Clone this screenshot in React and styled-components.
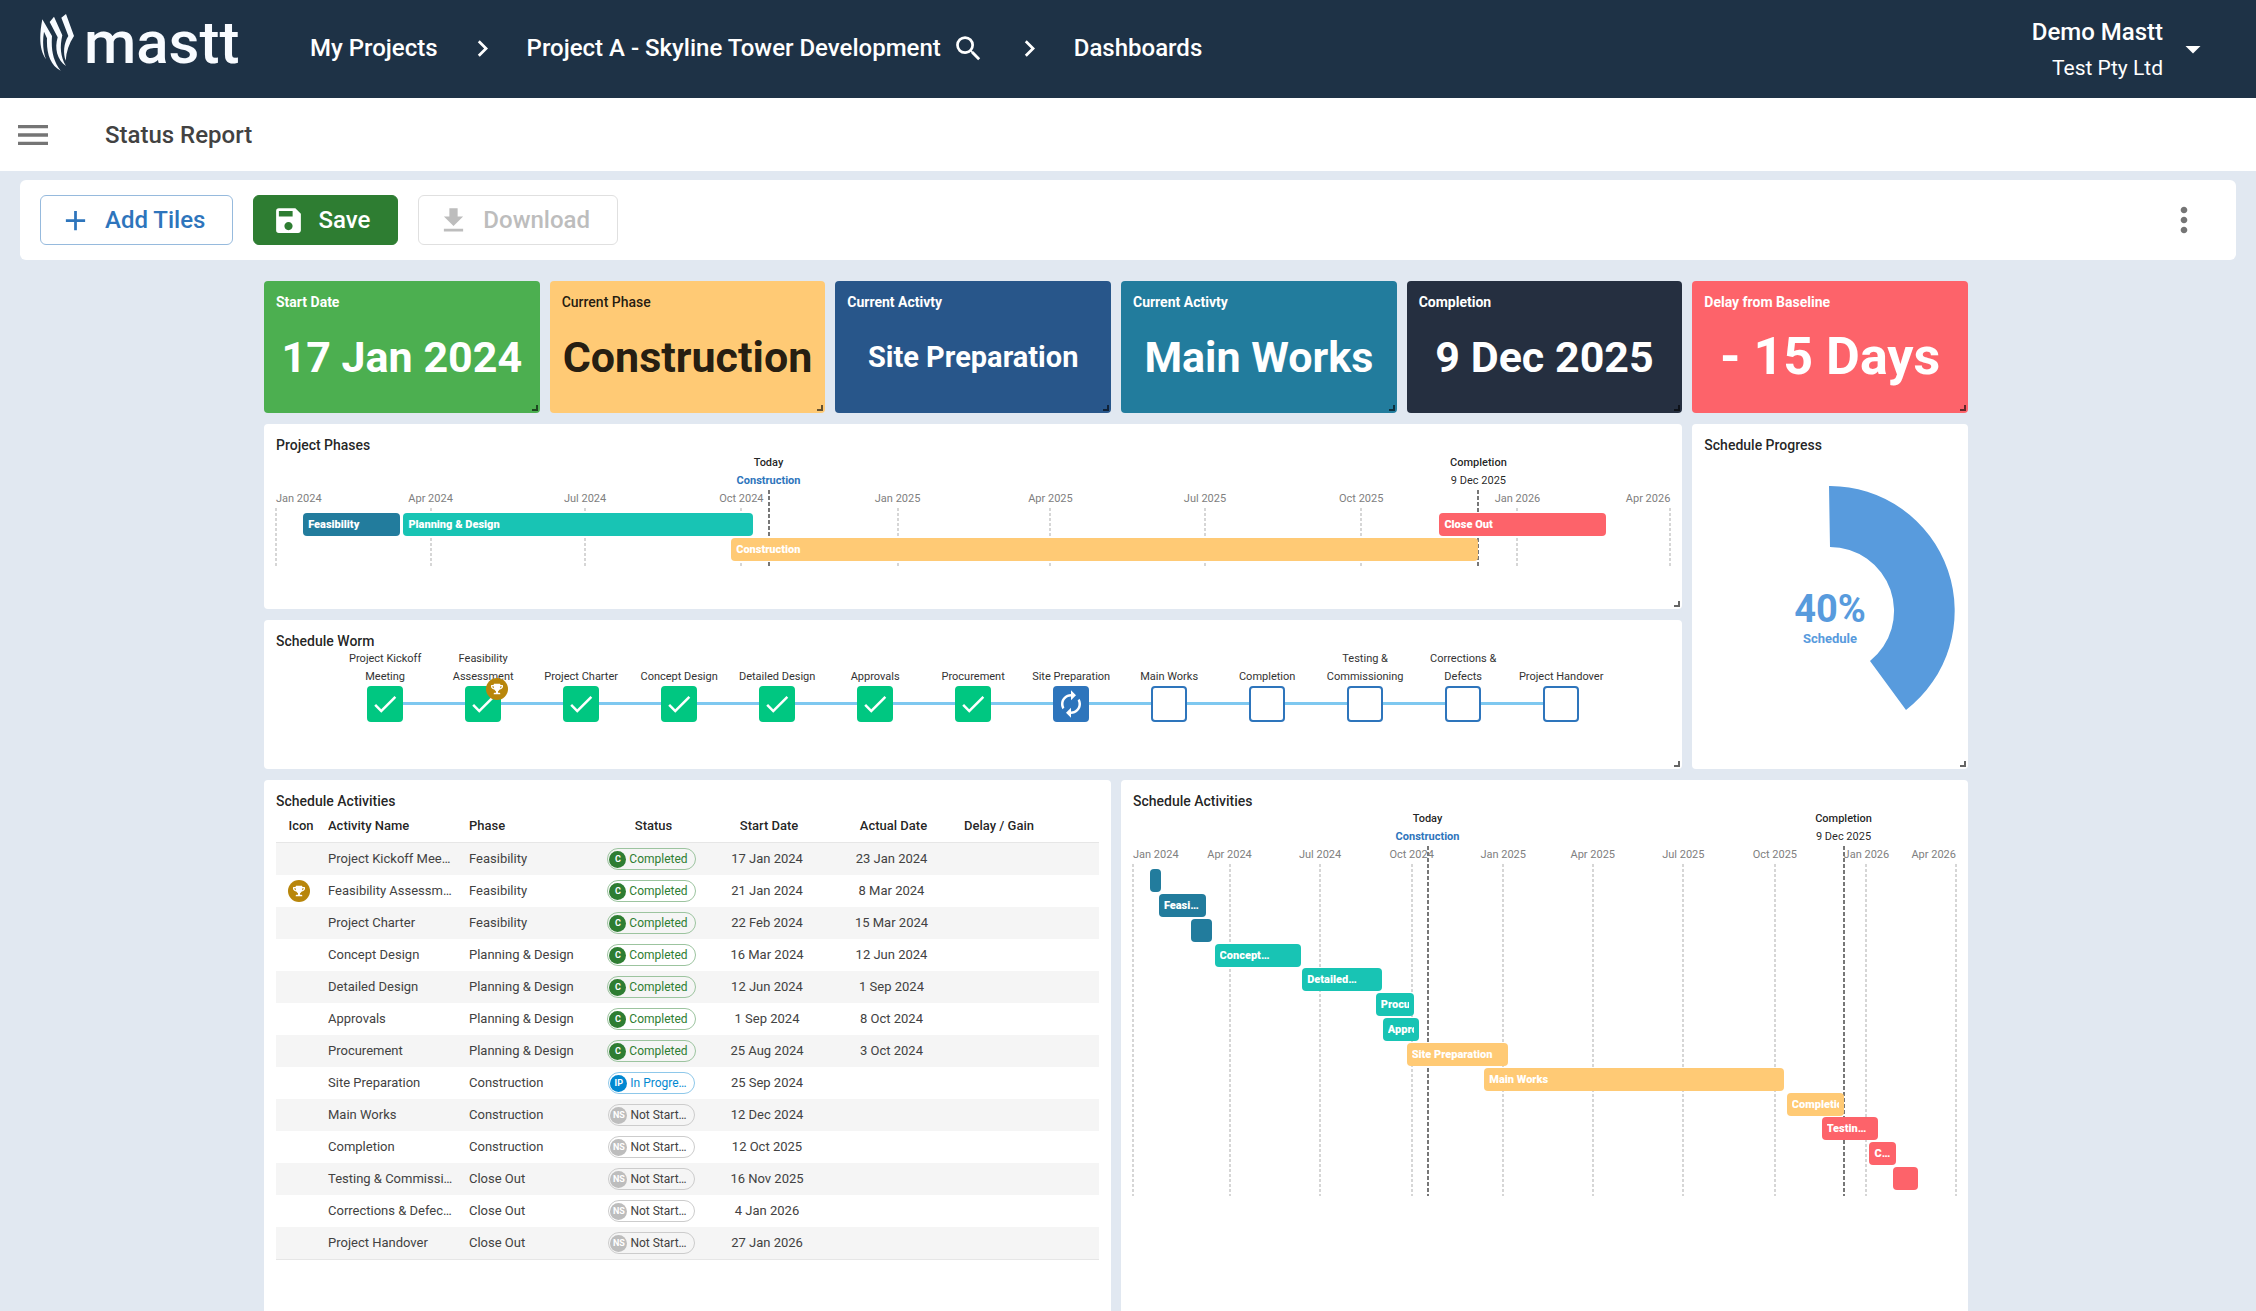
import styled, { createGlobalStyle, css } from "styled-components";
import {
	MdAdd,
	MdArrowDropDown,
	MdAutorenew,
	MdCheck,
	MdChevronRight,
	MdDownload,
	MdMenu,
	MdMoreVert,
	MdSave,
	MdSearch,
} from "react-icons/md";
import { FaTrophy } from "react-icons/fa";

const colors = {
	navy: "#1e3246",
	page: "#e1e8f1",
	blue: "#2e75bc",
	save: "#2e7d32",
	grey: "#757575",
	feasibility: "#227c9d",
	planning: "#18c4b4",
	construction: "#ffca75",
	closeOut: "#fd636a",
	progress: "#589bdd",
	worm: "#7ec8f0",
	done: "#00c781",
	gold: "#b8860b",
};

const kpis = [
	{ title: "Start Date", value: "17 Jan 2024", size: "large", bg: "#4caf50" },
	{ title: "Current Phase", value: "Construction", size: "large", bg: colors.construction, dark: true },
	{ title: "Current Activty", value: "Site Preparation", size: "small", bg: "#28568a" },
	{ title: "Current Activty", value: "Main Works", size: "large", bg: colors.feasibility },
	{ title: "Completion", value: "9 Dec 2025", size: "large", bg: "#252f40" },
	{ title: "Delay from Baseline", value: "- 15 Days", size: "huge", bg: colors.closeOut },
];

const ticks = [
	{ label: "Jan 2024", date: "2024-01-01" },
	{ label: "Apr 2024", date: "2024-04-01" },
	{ label: "Jul 2024", date: "2024-07-01" },
	{ label: "Oct 2024", date: "2024-10-01" },
	{ label: "Jan 2025", date: "2025-01-01" },
	{ label: "Apr 2025", date: "2025-04-01" },
	{ label: "Jul 2025", date: "2025-07-01" },
	{ label: "Oct 2025", date: "2025-10-01" },
	{ label: "Jan 2026", date: "2026-01-01" },
	{ label: "Apr 2026", date: "2026-04-01" },
];

const markers = [
	{ title: "Today", note: "Construction", date: "2024-10-17", active: true },
	{ title: "Completion", note: "9 Dec 2025", date: "2025-12-09" },
];

const phaseBars = [
	{ row: 0, label: "Feasibility", from: "2024-01-17", to: "2024-03-14", color: colors.feasibility },
	{ row: 0, label: "Planning & Design", from: "2024-03-16", to: "2024-10-08", color: colors.planning },
	{ row: 0, label: "Close Out", from: "2025-11-16", to: "2026-02-22", color: colors.closeOut },
	{ row: 1, label: "Construction", from: "2024-09-25", to: "2025-12-09", color: colors.construction },
];

const activityBars = [
	{ label: "", from: "2024-01-17", to: "2024-01-23", color: colors.feasibility },
	{ label: "Feasi…", from: "2024-01-21", to: "2024-03-08", color: colors.feasibility },
	{ label: "", from: "2024-02-22", to: "2024-03-14", color: colors.feasibility },
	{ label: "Concept…", from: "2024-03-17", to: "2024-06-12", color: colors.planning },
	{ label: "Detailed…", from: "2024-06-13", to: "2024-09-01", color: colors.planning },
	{ label: "Procurement", from: "2024-08-26", to: "2024-10-03", color: colors.planning },
	{ label: "Approvals", from: "2024-09-02", to: "2024-10-08", color: colors.planning },
	{ label: "Site Preparation", from: "2024-09-26", to: "2025-01-06", color: colors.construction },
	{ label: "Main Works", from: "2024-12-13", to: "2025-10-10", color: colors.construction },
	{ label: "Completion", from: "2025-10-13", to: "2025-12-09", color: colors.construction },
	{ label: "Testin…", from: "2025-11-17", to: "2026-01-13", color: colors.closeOut },
	{ label: "C…", from: "2026-01-04", to: "2026-01-31", color: colors.closeOut },
	{ label: "", from: "2026-01-28", to: "2026-02-22", color: colors.closeOut },
].map((bar, row) => ({ ...bar, row }));

const wormSteps = [
	{ name: "Project Kickoff Meeting", state: "done" },
	{ name: "Feasibility Assessment", state: "done", trophy: true },
	{ name: "Project Charter", state: "done" },
	{ name: "Concept Design", state: "done" },
	{ name: "Detailed Design", state: "done" },
	{ name: "Approvals", state: "done" },
	{ name: "Procurement", state: "done" },
	{ name: "Site Preparation", state: "active" },
	{ name: "Main Works", state: "todo" },
	{ name: "Completion", state: "todo" },
	{ name: "Testing & Commissioning", state: "todo" },
	{ name: "Corrections & Defects", state: "todo" },
	{ name: "Project Handover", state: "todo" },
];

const statuses = {
	C: { label: "Completed", color: "#2e7d32", border: "#9cc49f", text: "#2e7d32" },
	IP: { label: "In Progre…", color: "#0288d1", border: "#8ec8ea", text: "#0288d1" },
	NS: { label: "Not Start…", color: "#bdbdbd", border: "#cccccc", text: "#424242" },
};

const activities = [
	{ name: "Project Kickoff Mee…", phase: "Feasibility", status: "C", start: "17 Jan 2024", actual: "23 Jan 2024" },
	{ name: "Feasibility Assessm…", phase: "Feasibility", status: "C", start: "21 Jan 2024", actual: "8 Mar 2024", trophy: true },
	{ name: "Project Charter", phase: "Feasibility", status: "C", start: "22 Feb 2024", actual: "15 Mar 2024" },
	{ name: "Concept Design", phase: "Planning & Design", status: "C", start: "16 Mar 2024", actual: "12 Jun 2024" },
	{ name: "Detailed Design", phase: "Planning & Design", status: "C", start: "12 Jun 2024", actual: "1 Sep 2024" },
	{ name: "Approvals", phase: "Planning & Design", status: "C", start: "1 Sep 2024", actual: "8 Oct 2024" },
	{ name: "Procurement", phase: "Planning & Design", status: "C", start: "25 Aug 2024", actual: "3 Oct 2024" },
	{ name: "Site Preparation", phase: "Construction", status: "IP", start: "25 Sep 2024" },
	{ name: "Main Works", phase: "Construction", status: "NS", start: "12 Dec 2024" },
	{ name: "Completion", phase: "Construction", status: "NS", start: "12 Oct 2025" },
	{ name: "Testing & Commissi…", phase: "Close Out", status: "NS", start: "16 Nov 2025" },
	{ name: "Corrections & Defec…", phase: "Close Out", status: "NS", start: "4 Jan 2026" },
	{ name: "Project Handover", phase: "Close Out", status: "NS", start: "27 Jan 2026" },
];

function Logo() {
	return (
		<LogoLink href="#home">
			<svg width="34" height="57" viewBox="59 42 102 171" fill="#f8fbff" aria-hidden="true">
				<path d="M66 58 L95 108 C92 150 98 182 121 212 C90 196 78 160 80 115 L71 95 C66 125 68 155 77 178 C57 150 56 110 66 58Z" />
				<path d="M88 66 L101 50 L126 106 C118 140 120 170 137 198 C110 180 102 145 112 112Z" />
				<path d="M123 53 L137 42 L161 108 C146 130 138 155 136 182 C128 160 130 130 144 108Z" />
			</svg>
			<span>mastt</span>
		</LogoLink>
	);
}

function TrophyBadge({ className }) {
	return (
		<Trophy className={className}>
			<FaTrophy size={12} />
		</Trophy>
	);
}

function Tile({ title, area, children }) {
	return (
		<TileStyled $area={area}>
			<TileTitle>{title}</TileTitle>
			{children}
			<ResizeHandle />
		</TileStyled>
	);
}

function Timeline({ start, end, bars, height }) {
	const from = Date.parse(start);
	const total = Date.parse(end) - from;
	const percent = (date) => ((Date.parse(date) - from) / total) * 100;
	const rows = Math.max(...bars.map((bar) => bar.row)) + 1;
	// the first tick always sits on the left edge of the plot
	const tickLeft = (tick, i) => `${i === 0 ? 0 : percent(tick.date)}%`;

	return (
		<TimelineStyled>
			<MarkerLabels>
				{markers.map((marker) => (
					<MarkerLabel key={marker.title} $active={marker.active} style={{ left: `${percent(marker.date)}%` }}>
						<strong>{marker.title}</strong>
						<span>{marker.note}</span>
					</MarkerLabel>
				))}
			</MarkerLabels>
			<Axis>
				{ticks.map((tick, i) => (
					<AxisLabel key={tick.label} style={{ left: tickLeft(tick, i) }}>
						{tick.label}
					</AxisLabel>
				))}
			</Axis>
			<Plot $height={height}>
				{ticks.map((tick, i) => (
					<GridLine key={tick.label} style={{ left: tickLeft(tick, i) }} />
				))}
				{markers.map((marker) => (
					<MarkerLine key={marker.title} style={{ left: `${percent(marker.date)}%` }} />
				))}
				{Array.from({ length: rows }, (_, row) => (
					<BarRow key={row}>
						{bars
							.filter((bar) => bar.row === row)
							.map((bar) => (
								<Bar
									key={bar.from}
									$color={bar.color}
									style={{
										right: `${100 - percent(bar.to)}%`,
										width: `${percent(bar.to) - percent(bar.from)}%`,
									}}
								>
									<span>{bar.label}</span>
								</Bar>
							))}
					</BarRow>
				))}
			</Plot>
		</TimelineStyled>
	);
}

function Worm() {
	return (
		<WormList>
			{wormSteps.map((step) => (
				<WormStep key={step.name}>
					<WormLabel>{step.name}</WormLabel>
					<WormNode $state={step.state}>
						{step.state === "done" && <MdCheck size={30} />}
						{step.state === "active" && <MdAutorenew size={30} />}
						{step.trophy && <WormTrophy />}
					</WormNode>
				</WormStep>
			))}
		</WormList>
	);
}

function StatusChip({ code }) {
	const status = statuses[code];
	return (
		<Chip $status={status}>
			<b>{code}</b>
			{status.label}
		</Chip>
	);
}

function ActivityTable() {
	return (
		<Table>
			<colgroup>
				<Col $width={46} />
				<Col $width={141} />
				<Col $width={140} />
				<Col $width={97} />
				<Col $width={134} />
				<Col $width={115} />
				<Col $width={96} />
				<col />
			</colgroup>
			<thead>
				<tr>
					<HeadCell $center>Icon</HeadCell>
					<HeadCell>Activity Name</HeadCell>
					<HeadCell>Phase</HeadCell>
					<HeadCell $center>Status</HeadCell>
					<HeadCell $center>Start Date</HeadCell>
					<HeadCell $center>Actual Date</HeadCell>
					<HeadCell $center>Delay / Gain</HeadCell>
					<HeadCell />
				</tr>
			</thead>
			<tbody>
				{activities.map((activity) => (
					<BodyRow key={activity.name}>
						<Cell $center>{activity.trophy && <TrophyBadge />}</Cell>
						<Cell>{activity.name}</Cell>
						<Cell>{activity.phase}</Cell>
						<ChipCell>
							<StatusChip code={activity.status} />
						</ChipCell>
						<Cell $center>{activity.start}</Cell>
						<Cell $center>{activity.actual}</Cell>
						<Cell />
						<Cell />
					</BodyRow>
				))}
			</tbody>
		</Table>
	);
}

function ProgressDonut() {
	return (
		<Donut width="250" height="250" viewBox="0 0 250 250" role="img" aria-label="Schedule progress">
			<path
				d="M124 0 A125 125 0 0 1 201 224 L165 175 A64 64 0 0 0 125 61Z"
				fill={colors.progress}
			/>
			<text x="125" y="136" fontSize="38">40%</text>
			<text x="125" y="157" fontSize="13">Schedule</text>
		</Donut>
	);
}

export default function App() {
	return (
		<Page>
			<GlobalStyle />
			<Header>
				<Logo />
				<Breadcrumbs aria-label="Breadcrumb">
					<a href="#projects">My Projects</a>
					<MdChevronRight size={33} />
					<ProjectCrumb>
						<a href="#project">Project A - Skyline Tower Development</a>
						<IconButton aria-label="Search projects">
							<MdSearch size={33} />
						</IconButton>
					</ProjectCrumb>
					<MdChevronRight size={33} />
					<a href="#dashboards">Dashboards</a>
				</Breadcrumbs>
				<User>
					<UserText>
						<strong>Demo Mastt</strong>
						<span>Test Pty Ltd</span>
					</UserText>
					<IconButton aria-label="Account menu">
						<MdArrowDropDown size={36} />
					</IconButton>
				</User>
			</Header>
			<SubHeader>
				<IconButton aria-label="Open menu">
					<MdMenu size={40} color={colors.grey} />
				</IconButton>
				<h1>Status Report</h1>
			</SubHeader>
			<Toolbar>
				<ToolButton $variant="outlined">
					<MdAdd size={33} />
					Add Tiles
				</ToolButton>
				<ToolButton $variant="filled">
					<MdSave size={33} />
					Save
				</ToolButton>
				<ToolButton disabled>
					<MdDownload size={33} />
					Download
				</ToolButton>
				<MoreButton aria-label="More options">
					<MdMoreVert size={40} color={colors.grey} />
				</MoreButton>
			</Toolbar>
			<Content>
				<Grid>
					{kpis.map((kpi, i) => (
						<KpiTile key={i} $bg={kpi.bg} $dark={kpi.dark}>
							<TileTitle>{kpi.title}</TileTitle>
							<KpiValue $size={kpi.size}>{kpi.value}</KpiValue>
							<ResizeHandle />
						</KpiTile>
					))}
					<Tile title="Project Phases" area="phases">
						<Timeline start="2024-01-01" end="2026-04-01" bars={phaseBars} height={58} />
					</Tile>
					<Tile title="Schedule Worm" area="worm">
						<Worm />
					</Tile>
					<Tile title="Schedule Progress" area="progress">
						<ProgressDonut />
					</Tile>
					<Tile title="Schedule Activities" area="table">
						<ActivityTable />
					</Tile>
					<Tile title="Schedule Activities" area="gantt">
						<Timeline start="2023-12-26" end="2026-04-01" bars={activityBars} height={332} />
					</Tile>
				</Grid>
			</Content>
		</Page>
	);
}

const GlobalStyle = createGlobalStyle`
  * {
    box-sizing: border-box;
  }

  body {
    margin: 0;
    background-color: ${colors.page};
    color: rgba(0, 0, 0, 0.87);
    font-family: Roboto, "Liberation Sans", sans-serif;
  }

  a {
    color: inherit;
    text-decoration: none;
  }

  button {
    font-family: inherit;
    cursor: pointer;
  }

  svg {
    flex-shrink: 0;
  }
`;

const Page = styled.div`
  height: 100vh;
  overflow: hidden;
`;

const Header = styled.header`
  display: flex;
  align-items: center;
  height: 98px;
  padding: 0 45px 0 40px;
  background-color: ${colors.navy};
  color: white;
`;

const LogoLink = styled.a`
  display: flex;
  align-items: center;
  gap: 10px;
  width: 270px;
  height: 98px;
  padding-bottom: 13px;
  color: #f8fbff;
  font-size: 60px;
  font-weight: 500;
  line-height: 57px;
`;

const Breadcrumbs = styled.nav`
  display: flex;
  align-items: center;
  gap: 28px;
  flex: 1;
  padding-bottom: 2px;
  font-size: 24px;
  font-weight: 500;
  line-height: 32px;
`;

const ProjectCrumb = styled.div`
  display: flex;
  align-items: center;
  gap: 11px;
`;

const IconButton = styled.button`
  display: flex;
  padding: 0;
  border: none;
  background: none;
  color: inherit;
`;

const User = styled.div`
  display: flex;
  align-items: center;
  gap: 12px;
`;

const UserText = styled.div`
  display: flex;
  flex-direction: column;
  gap: 4px;
  padding-top: 2px;
  text-align: right;

  strong {
    font-size: 24px;
    font-weight: 500;
    line-height: 32px;
  }

  span {
    font-size: 21px;
    line-height: 32px;
  }
`;

const SubHeader = styled.div`
  display: flex;
  align-items: center;
  gap: 52px;
  height: 73px;
  padding: 0 13px;
  background-color: white;

  h1 {
    margin: 0;
    color: #424242;
    font-size: 24px;
    font-weight: 500;
  }
`;

const Toolbar = styled.div`
  display: flex;
  align-items: center;
  gap: 20px;
  height: 80px;
  margin: 9px 20px 21px;
  padding: 0 32px 0 20px;
  border-radius: 6px;
  background-color: white;
`;

const ToolButton = styled.button`
  display: flex;
  align-items: center;
  gap: 13px;
  height: 50px;
  padding: 0 27px 0 18px;
  border: 1px solid #e0e0e0;
  border-radius: 6px;
  background-color: white;
  color: #bdbdbd;
  font-size: 24px;
  font-weight: 500;

  ${({ $variant }) =>
		$variant === "outlined" &&
		css`
      border-color: #96badd;
      color: ${colors.blue};
    `}

  ${({ $variant }) =>
		$variant === "filled" &&
		css`
      border-color: ${colors.save};
      background-color: ${colors.save};
      color: white;
    `}
`;

const MoreButton = styled(IconButton)`
  margin-left: auto;
`;

const Content = styled.main`
  padding: 0 45px 0 21px;
`;

const Grid = styled.div`
  display: grid;
  grid-template-columns: repeat(6, 1fr);
  grid-template-rows: 132px 185px 149px minmax(600px, auto);
  grid-template-areas:
    ". . . . . ."
    "phases phases phases phases phases progress"
    "worm worm worm worm worm progress"
    "table table table gantt gantt gantt";
  gap: 11px 10px;
  max-width: 1704px;
  margin: 0 auto;
`;

const TileStyled = styled.section`
  position: relative;
  grid-area: ${({ $area }) => $area};
  min-width: 0;
  padding: 12px 12px 0;
  border-radius: 4px;
  background-color: white;
`;

const TileTitle = styled.h2`
  margin: 0;
  font-size: 14px;
  font-weight: 500;
  line-height: 18px;
`;

const ResizeHandle = styled.span`
  position: absolute;
  right: 2px;
  bottom: 2px;
  width: 6px;
  height: 6px;
  border-right: 2px solid rgba(0, 0, 0, 0.6);
  border-bottom: 2px solid rgba(0, 0, 0, 0.6);
`;

const KpiTile = styled(TileStyled)`
  display: flex;
  flex-direction: column;
  background-color: ${({ $bg }) => $bg};
  color: ${({ $dark }) => ($dark ? "rgba(0, 0, 0, 0.87)" : "white")};

  ${TileTitle} {
    font-weight: ${({ $dark }) => ($dark ? 500 : 700)};
  }
`;

const valueSizes = { small: 29, large: 43, huge: 52 };

const KpiValue = styled.div`
  display: flex;
  align-items: center;
  justify-content: center;
  flex: 1;
  padding-bottom: 10px;
  font-size: ${({ $size }) => valueSizes[$size]}px;
  font-weight: 700;
  line-height: 56px;
  white-space: nowrap;
`;

const TimelineStyled = styled.div`
  font-size: 11px;
  line-height: 18px;
`;

const MarkerLabels = styled.div`
  position: relative;
  height: 36px;
`;

const MarkerLabel = styled.div`
  position: absolute;
  display: flex;
  flex-direction: column;
  align-items: center;
  transform: translateX(-50%);
  white-space: nowrap;

  strong {
    font-weight: 500;
  }

  span {
    color: ${({ $active }) => ($active ? colors.blue : "inherit")};
    font-weight: ${({ $active }) => ($active ? 700 : 400)};
  }
`;

const Axis = styled.div`
  position: relative;
  height: 18px;
`;

const AxisLabel = styled.span`
  position: absolute;
  transform: translateX(-50%);
  color: #808080;
  white-space: nowrap;

  &:first-child {
    transform: none;
  }

  &:last-child {
    transform: translateX(-100%);
  }
`;

const Plot = styled.div`
  position: relative;
  display: flex;
  flex-direction: column;
  height: ${({ $height }) => $height}px;
  padding: 5px 0 4px;
`;

const GridLine = styled.i`
  position: absolute;
  top: 0;
  bottom: 0;
  width: 2px;
  margin-left: -1px;
  background: repeating-linear-gradient(#d6d6d6 0 3px, transparent 3px 5px);
`;

const MarkerLine = styled.i`
  position: absolute;
  top: -18px;
  bottom: 0;
  width: 2px;
  margin-left: -1px;
  background: repeating-linear-gradient(#777777 0 4px, transparent 4px 6px);
`;

const BarRow = styled.div`
  position: relative;
  flex: 1;
`;

const Bar = styled.div`
  position: absolute;
  top: 0;
  min-width: 11px;
  height: 23px;
  padding: 0 5px;
  border-radius: 4px;
  background-color: ${({ $color }) => $color};
  color: white;
  font-weight: 900;
  line-height: 23px;

  span {
    display: block;
    overflow: hidden;
    white-space: nowrap;
  }
`;

const WormList = styled.ol`
  display: grid;
  grid-template-columns: repeat(13, minmax(0, 98px));
  justify-content: center;
  margin: 0;
  padding: 0;
  list-style: none;
`;

const WormStep = styled.li`
  position: relative;
  display: flex;
  flex-direction: column;
  align-items: center;

  & + &::before {
    content: "";
    position: absolute;
    right: 50%;
    bottom: 17px;
    width: 100%;
    height: 3px;
    background-color: ${colors.worm};
  }
`;

const WormLabel = styled.span`
  display: flex;
  align-items: flex-end;
  height: 36px;
  padding: 0 4px;
  color: #333333;
  font-size: 11px;
  line-height: 18px;
  text-align: center;
`;

const WormNode = styled.span`
  position: relative;
  z-index: 1;
  display: flex;
  align-items: center;
  justify-content: center;
  width: 36px;
  height: 36px;
  border: 2px solid ${({ $state }) => ($state === "done" ? colors.done : colors.blue)};
  border-radius: 4px;
  background-color: ${({ $state }) =>
		({ done: colors.done, active: colors.blue, todo: "white" })[$state]};
  color: white;
`;

const Trophy = styled.span`
  display: inline-flex;
  align-items: center;
  justify-content: center;
  width: 22px;
  height: 22px;
  border-radius: 50%;
  background-color: ${colors.gold};
  color: white;
  vertical-align: middle;
`;

const WormTrophy = styled(TrophyBadge)`
  position: absolute;
  top: -10px;
  right: -9px;
`;

const Table = styled.table`
  width: 100%;
  height: 450px;
  border-collapse: collapse;
  border-bottom: 1px solid #e6e6e6;
  table-layout: fixed;
  font-size: 13px;
`;

const Col = styled.col`
  width: ${({ $width }) => $width}px;
`;

const HeadCell = styled.th`
  height: 32px;
  padding: 0 0 0 ${({ $center }) => ($center ? 4 : 6)}px;
  border-bottom: 1px solid #e6e6e6;
  font-weight: 500;
  text-align: ${({ $center }) => ($center ? "center" : "left")};
`;

const BodyRow = styled.tr`
  &:nth-child(odd) {
    background-color: #f5f5f5;
  }
`;

const Cell = styled.td`
  padding: ${({ $center }) => ($center ? "0" : "0 0 0 6px")};
  color: #424242;
  line-height: 18px;
  text-align: ${({ $center }) => ($center ? "center" : "left")};
  white-space: nowrap;
`;

const ChipCell = styled.td`
  padding: 1px 0 0;
  text-align: center;
`;

const Chip = styled.span`
  display: inline-flex;
  align-items: center;
  gap: 3px;
  height: 22px;
  padding: 0 7px 0 1px;
  border: 1px solid ${({ $status }) => $status.border};
  border-radius: 11px;
  color: ${({ $status }) => $status.text};
  font-size: 12px;
  vertical-align: middle;

  b {
    width: 17px;
    height: 17px;
    border-radius: 50%;
    background-color: ${({ $status }) => $status.color};
    color: white;
    font-size: 9px;
    line-height: 17px;
    text-align: center;
  }
`;

const Donut = styled.svg`
  display: block;
  margin: 32px auto 0;

  text {
    fill: ${colors.progress};
    font-weight: 700;
    text-anchor: middle;
  }
`;
